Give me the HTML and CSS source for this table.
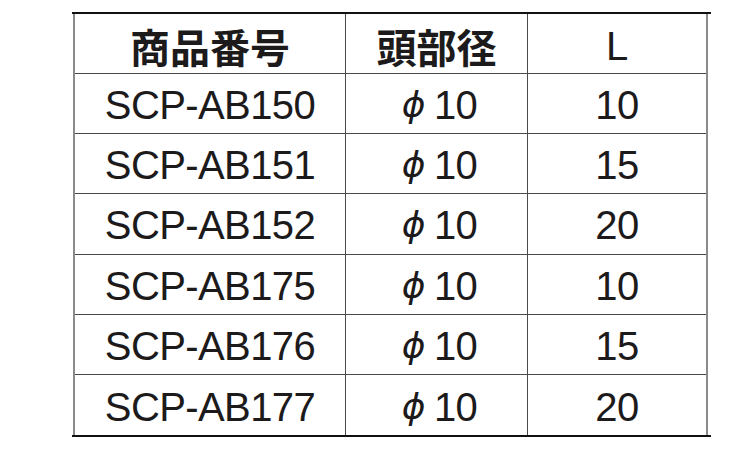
FILE: index.html
```html
<!DOCTYPE html>
<html lang="ja">
<head>
<meta charset="utf-8">
<title>商品番号表</title>
<link rel="stylesheet" href="styles.css">
</head>
<body>
<div class="sheet">
  <div class="grid">
    <div class="cell head">商品番号</div>
    <div class="cell head">頭部径</div>
    <div class="cell head last-col">L</div>

    <div class="cell">SCP-AB150</div>
    <div class="cell dia"><span class="phi">ϕ</span>10</div>
    <div class="cell last-col">10</div>

    <div class="cell">SCP-AB151</div>
    <div class="cell dia"><span class="phi">ϕ</span>10</div>
    <div class="cell last-col">15</div>

    <div class="cell">SCP-AB152</div>
    <div class="cell dia"><span class="phi">ϕ</span>10</div>
    <div class="cell last-col">20</div>

    <div class="cell">SCP-AB175</div>
    <div class="cell dia"><span class="phi">ϕ</span>10</div>
    <div class="cell last-col">10</div>

    <div class="cell">SCP-AB176</div>
    <div class="cell dia"><span class="phi">ϕ</span>10</div>
    <div class="cell last-col">15</div>

    <div class="cell last-row">SCP-AB177</div>
    <div class="cell dia last-row"><span class="phi">ϕ</span>10</div>
    <div class="cell last-row last-col">20</div>
  </div>
</div>
</body>
</html>
```
FILE: styles.css
```css
html, body {
  margin: 0;
  padding: 0;
  background: #ffffff;
}

body {
  padding-top: 12px;
}

.sheet {
  margin-left: 72px;
  width: 639px;
  border-top: 2px solid #111111;
  border-bottom: 2px solid #111111;
}

.grid {
  display: grid;
  grid-template-columns: 271px 182px 178px;
  grid-template-rows: 60px repeat(6, 60.2px);
  margin: 0 3px 0 1px;
  border-left: 2px solid #8a8a8a;
  border-right: 2px solid #8a8a8a;
}

.cell {
  display: flex;
  align-items: center;
  justify-content: center;
  box-sizing: border-box;
  border-right: 1px solid #4a4a4a;
  border-bottom: 1px solid #4a4a4a;
  padding-top: 3px;
  font-family: "Liberation Sans", Arial, sans-serif;
  font-size: 40px;
  line-height: 1;
  letter-spacing: -0.6px;
  color: #1c1a1b;
}

.cell.dia {
  padding-left: 6px;
}

.cell.last-col {
  border-right: none;
}

.cell.last-row {
  border-bottom: none;
}

.cell.head {
  font-family: "Noto Sans CJK JP", "Noto Sans", sans-serif;
  font-weight: 700;
  letter-spacing: 0;
  padding-top: 5px;
}

.cell.head.last-col {
  font-family: "Liberation Sans", Arial, sans-serif;
  font-weight: 400;
  padding-top: 4px;
}

.phi {
  font-family: "DejaVu Sans", sans-serif;
  font-style: italic;
  font-size: 36px;
  margin-right: 9px;
}
```
